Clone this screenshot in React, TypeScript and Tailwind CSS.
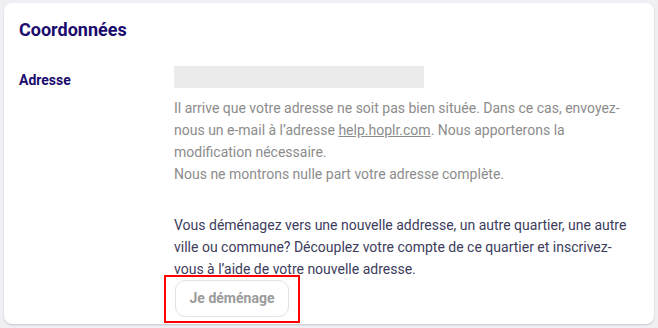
import React from 'react';

export default function App() {
  return (
    <div className="min-h-screen bg-[#f0f0f4] pt-[3px] px-[4px] font-['Roboto',sans-serif]">
      <div className="bg-white rounded-lg shadow-[0_1px_2px_rgba(0,0,0,0.18)] pt-[13px] pl-[15px] pr-[22px] pb-[7px]">
        {/* Header */}
        <h2 className="text-[18px] leading-[28px] font-bold text-[#1a0b6d]">Coordonnées</h2>

        {/* Adresse row */}
        <div className="grid grid-cols-[155px_1fr] mt-[22px]">
          <div className="mt-[3px] h-[22px] flex items-center text-[14px] font-bold text-[#1a0b6d]">Adresse</div>
          <div>
            <div className="w-[250px] h-[22px] bg-[#ebebeb]" />

            <div className="mt-[9px] text-[14px] leading-[22px] text-[#8c8c8c]">
              <p>
                Il arrive que votre adresse ne soit pas bien située. Dans ce cas, envoyez-nous un e-mail à l’adresse{' '}
                <a href="#" className="underline">help.hoplr.com</a>. Nous apporterons la modification nécessaire.
              </p>
              <p>Nous ne montrons nulle part votre adresse complète.</p>
            </div>

            <p className="mt-[29px] text-[14px] leading-[22px] text-[#3d3c5c]">
              Vous déménagez vers une nouvelle addresse, un autre quartier, une autre ville ou commune? Découplez votre compte de ce quartier et inscrivez-vous à l’aide de votre nouvelle adresse.
            </p>

            <div className="relative inline-block ml-[1px]">
              <button className="h-[37px] w-[114px] rounded-[10px] border border-[#e2e2e2] bg-white text-[14px] font-bold text-[#9b9b9b]">
                Je déménage
              </button>
              <div className="absolute left-[-11px] right-[-11px] top-[-5px] bottom-[-6px] border-2 border-[#ff0000] pointer-events-none" />
            </div>
          </div>
        </div>
      </div>
    </div>
  );
}
